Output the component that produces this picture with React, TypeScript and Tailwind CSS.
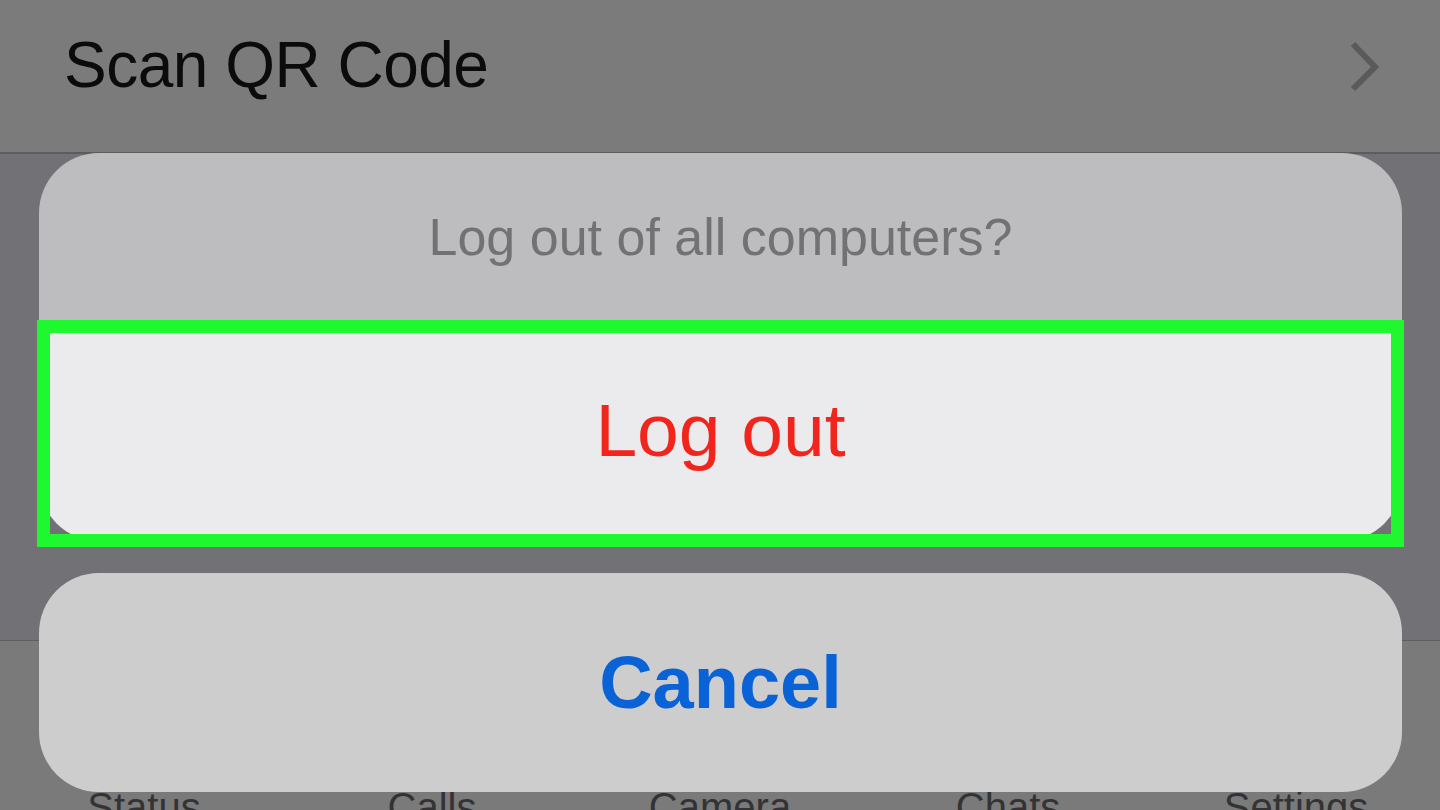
import React from "react";

export default function App() {
  const font = { fontFamily: '"Liberation Sans", Arial, sans-serif' };
  const tabs = ["Status", "Calls", "Camera", "Chats", "Settings"];
  return (
    <div
      className="relative w-[1440px] h-[810px] overflow-hidden bg-[#717176]"
      style={font}
    >
      {/* background page */}
      <div className="flex flex-col h-full">
        <div className="h-[152px] bg-[#7b7b7b] flex items-start pl-[64px] pr-[60px]">
          <span className="mt-[33px] text-[64px] leading-none text-[#0b0b0b] tracking-[-0.5px]">
            Scan QR Code
          </span>
          <svg
            className="ml-auto mt-[40px]"
            width="32"
            height="52"
            viewBox="0 0 32 52"
            fill="none"
          >
            <path
              d="M5 4 L27 27 L5 49"
              stroke="#5a5a5a"
              strokeWidth="6"
              strokeLinejoin="miter"
            />
          </svg>
        </div>
        <div className="h-[2px] bg-[#5c5c5c]" />
        <div className="flex-1 bg-[#717176]" />
        <div className="h-px bg-[#5e5e5e]" />
        <div className="h-[169px] bg-[#7a7a7a] grid grid-cols-5">
          {tabs.map((t) => (
            <div key={t} className="flex justify-center pt-[146px]">
              <span className="text-[40px] leading-none text-[#333335]">{t}</span>
            </div>
          ))}
        </div>
      </div>

      {/* action sheet overlay */}
      <div className="absolute left-[39px] top-[153px] w-[1363px] flex flex-col gap-[32px]">
        <div className="rounded-[60px] overflow-hidden flex flex-col">
          <div className="h-[167px] bg-[#bdbdbf] flex items-center justify-center">
            <span className="text-[52px] leading-none text-[#727275]">
              Log out of all computers?
            </span>
          </div>
          <div className="h-[221px] bg-[#ebebed] flex items-center justify-center">
            <span className="text-[75px] leading-none text-[#f2251d]">Log out</span>
          </div>
        </div>
        <div className="h-[219px] rounded-[60px] bg-[#cdcdcd] flex items-center justify-center">
          <span className="text-[74px] leading-none font-bold text-[#0a63d6]">
            Cancel
          </span>
        </div>
      </div>

      {/* green highlight annotation */}
      <div className="absolute left-[37px] top-[320px] w-[1367px] h-[227px] border-[13px] border-[#1ff72f]" />
    </div>
  );
}
